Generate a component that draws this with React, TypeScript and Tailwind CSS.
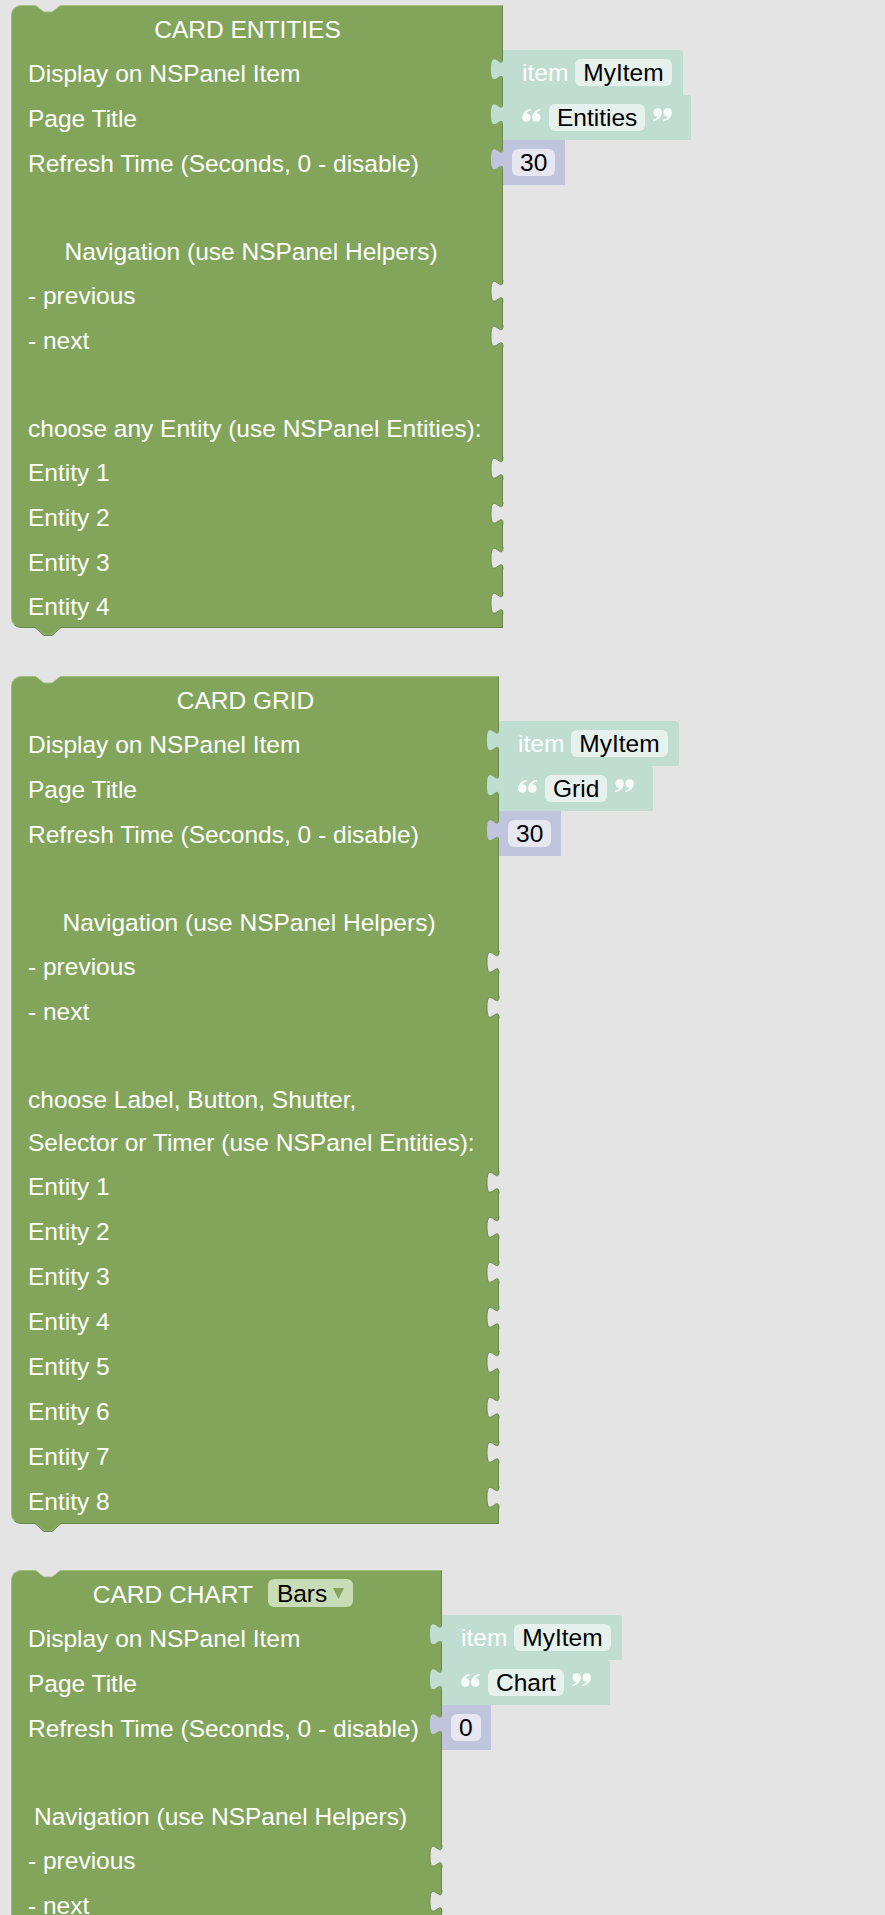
import React from "react";

const BG = "#e4e4e4";
const GREEN = "#82a55b";
const GREEN_DARK = "#67884a";
const TEAL = "#c0ddd2";
const LAVENDER = "#c0c4dd";

type Row =
  | { kind: "title"; text: string; dropdown?: string; pad: string }
  | { kind: "input"; text: string; plugged?: boolean; h?: string }
  | { kind: "label"; text: string }
  | { kind: "center"; text: string }
  | { kind: "blank" };

const TAB_PATH = "M8 0 C8 10 0 -8 0 7.5 C0 23 8 5 8 15 Z";
const TAB_EDGE = "M8 0 C8 10 0 -8 0 7.5 C0 23 8 5 8 15";

// puzzle tab of a plugged value block, sticks out to the left
function Tab({ fill }: { fill: string }) {
  return (
    <svg className="absolute left-[-12px] top-[7.5px] h-[22.5px] w-[12px] overflow-visible" viewBox="0 0 8 15">
      <path d={TAB_PATH} fill={fill} />
    </svg>
  );
}

// empty value socket cut into the right edge
function Socket() {
  return (
    <svg className="absolute right-[-1px] top-[7.5px] h-[22.5px] w-[12px] overflow-visible" viewBox="0 0 8 15">
      <path d={TAB_PATH} fill={BG} />
      <path d={TAB_EDGE} fill="none" stroke={GREEN_DARK} strokeWidth="0.6" />
    </svg>
  );
}

function Quote({ open }: { open: boolean }) {
  const mark = "M8.6 0.8 C4.5 1.6 0.3 4.6 0.1 9.5 A4.2 4.2 0 1 0 4.6 5.3 C5.2 3.8 6.6 2.7 8.9 2.2 Z";
  return (
    <svg className="mt-[-6px] h-[14px] w-[19px] shrink-0" viewBox="0 0 19 14">
      <g fill="#f6fbf9" transform={open ? "" : "rotate(180 9.5 7)"}>
        <path d={mark} />
        <path d={mark} transform="translate(10 0)" />
      </g>
    </svg>
  );
}

function Field({ children }: { children: React.ReactNode }) {
  return (
    <span className="flex h-[27px] items-center rounded-[6px] bg-white/60 px-[8px] pt-[2px] text-[24.5px] leading-none text-black">
      {children}
    </span>
  );
}

function ItemBlock({ value }: { value: string }) {
  return (
    <div className="relative flex h-[45px] items-center gap-[7px] rounded-tr-[3px] bg-[#c0ddd2] pl-[19px] pr-[11px]">
      <Tab fill={TEAL} />
      <span className="translate-y-[1px] text-[24.5px] leading-none text-white">item</span>
      <Field>{value}</Field>
    </div>
  );
}

function TextBlock({ value }: { value: string }) {
  return (
    <div className="relative flex h-[45px] items-center rounded-tr-[3px] bg-[#c0ddd2] pl-[19px] pr-[19px]">
      <Tab fill={TEAL} />
      <Quote open />
      <span className="ml-[8px] mr-[8px]">
        <Field>{value}</Field>
      </span>
      <Quote open={false} />
    </div>
  );
}

function NumberBlock({ value }: { value: string }) {
  return (
    <div className="relative flex h-[45px] items-center bg-[#c0c4dd] pl-[9px] pr-[10px]">
      <Tab fill={LAVENDER} />
      <Field>{value}</Field>
    </div>
  );
}

function Dropdown({ value }: { value: string }) {
  return (
    <span className="flex h-[28px] items-center gap-[6px] rounded-[6px] bg-[#c8dcb5] px-[9px] text-[24.5px] leading-none text-black">
      <span className="translate-y-[1px]">{value}</span>
      <svg className="h-[12px] w-[11px]" viewBox="0 0 11 12">
        <polygon points="0,1 11,1 5.5,12" fill={GREEN} />
      </svg>
    </span>
  );
}

function BlockRow({ row }: { row: Row }) {
  switch (row.kind) {
    case "title":
      return (
        <div className={`flex h-[44px] items-center justify-center gap-[15px] pl-[16px] ${row.pad}`}>
          <span className="translate-y-[2px]">{row.text}</span>
          {row.dropdown && <Dropdown value={row.dropdown} />}
        </div>
      );
    case "input":
      return (
        <div className={`relative flex items-center pl-[16px] ${row.h ?? "h-[45px]"}`}>
          <span className="translate-y-[2px]">{row.text}</span>
          {!row.plugged && <Socket />}
        </div>
      );
    case "label":
      return (
        <div className="flex h-[43px] items-center pl-[16px]">
          <span className="translate-y-[2px]">{row.text}</span>
        </div>
      );
    case "center":
      return (
        <div className="flex h-[43px] items-center justify-center pl-[16px] pr-[28px]">
          <span className="translate-y-[2px]">{row.text}</span>
        </div>
      );
    default:
      return <div className="h-[44px]" />;
  }
}

function Card({
  width,
  rows,
  title,
  className,
}: {
  width: string;
  rows: Row[];
  title: string;
  className?: string;
}) {
  return (
    <div className={`flex items-start ${className ?? ""}`}>
      <div
        className={`relative shrink-0 rounded-l-[10px] border border-t-[#a3c083] border-l-[#9dbb7e] border-r-[#67884a] border-b-[#67884a] bg-[#82a55b] text-[24.5px] leading-none text-white ${width}`}
      >
        {/* notch on top */}
        <svg className="absolute left-[23px] top-[-1px] h-[8px] w-[26px] overflow-visible" viewBox="0 0 26 8">
          <polygon points="0,0 9,7 17,7 26,0" fill={BG} />
          <polyline points="0,0 9,7 17,7 26,0" fill="none" stroke="#a3c083" strokeWidth="1" />
        </svg>
        {rows.map((row, i) => (
          <BlockRow key={i} row={row} />
        ))}
        {/* tab below */}
        <svg className="absolute left-[23px] top-full h-[9px] w-[26px] overflow-visible" viewBox="0 0 26 9">
          <polygon points="0,0 9,8 17,8 26,0" fill={GREEN} />
          <polyline points="0,0.5 9,8.5 17,8.5 26,0.5" fill="none" stroke={GREEN_DARK} strokeWidth="1" />
        </svg>
      </div>
      <div className="mt-[45px] flex flex-col items-start">
        <ItemBlock value="MyItem" />
        <TextBlock value={title} />
        <NumberBlock value={title === "Chart" ? "0" : "30"} />
      </div>
    </div>
  );
}

const head: Row[] = [
  { kind: "input", text: "Display on NSPanel Item", plugged: true },
  { kind: "input", text: "Page Title", plugged: true },
  { kind: "input", text: "Refresh Time (Seconds, 0 - disable)", plugged: true },
  { kind: "blank" },
  { kind: "center", text: "Navigation (use NSPanel Helpers)" },
  { kind: "input", text: "- previous" },
  { kind: "input", text: "- next" },
];

const entitiesRows: Row[] = [
  { kind: "title", text: "CARD ENTITIES", pad: "pr-[35px]" },
  ...head,
  { kind: "blank" },
  { kind: "label", text: "choose any Entity (use NSPanel Entities):" },
  { kind: "input", text: "Entity 1" },
  { kind: "input", text: "Entity 2" },
  { kind: "input", text: "Entity 3" },
  { kind: "input", text: "Entity 4", h: "h-[43px]" },
];

const gridRows: Row[] = [
  { kind: "title", text: "CARD GRID", pad: "pr-[35px]" },
  ...head,
  { kind: "blank" },
  { kind: "label", text: "choose Label, Button, Shutter," },
  { kind: "label", text: "Selector or Timer (use NSPanel Entities):" },
  ...[1, 2, 3, 4, 5, 6, 7, 8].map((n): Row => ({ kind: "input", text: `Entity ${n}` })),
];

const chartRows: Row[] = [
  { kind: "title", text: "CARD CHART", dropdown: "Bars", pad: "pr-[23px]" },
  ...head,
  { kind: "blank" },
  { kind: "label", text: "Chart Color" },
  { kind: "input", text: "Y-Axis Label" },
];

export default function App() {
  return (
    <div className="flex h-[1915px] w-full flex-col overflow-hidden bg-[#e4e4e4] pl-[11px] pt-[5px] font-['Liberation_Sans',Arial,sans-serif]">
      <Card width="w-[492px]" rows={entitiesRows} title="Entities" />
      <Card width="w-[488px]" rows={gridRows} title="Grid" className="mt-[48px]" />
      <Card width="w-[431px]" rows={chartRows} title="Chart" className="mt-[46px]" />
    </div>
  );
}
